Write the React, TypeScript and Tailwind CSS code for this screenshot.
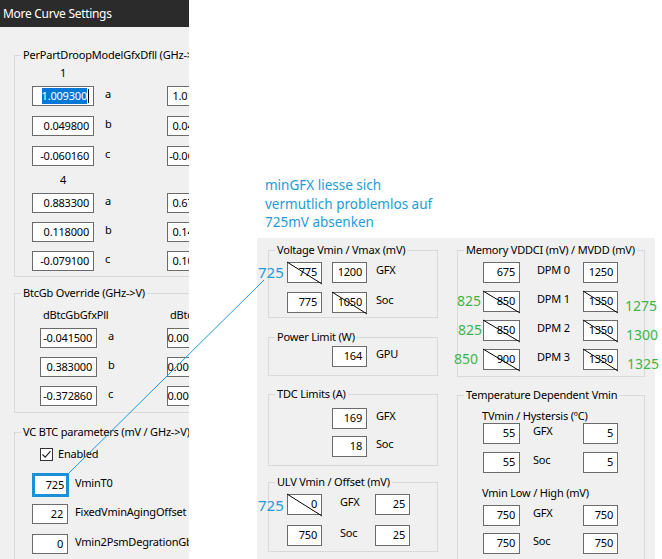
import React from "react"

type BoxProps = {
  v: React.ReactNode
  w: string
  h?: string
  struck?: boolean
}

// white windows style text box, value right aligned
const Box = ({ v, w, h = "h-[21px]", struck }: BoxProps) => (
  <div
    className={`relative flex shrink-0 items-center justify-end border border-[#6b6b6b] bg-white pr-[4px] text-black ${w} ${h}`}
  >
    {v}
    {struck && (
      <svg className="absolute -left-px -top-px h-[calc(100%+3px)] w-[calc(100%+2px)] overflow-visible">
        <line x1="0" y1="0" x2="100%" y2="100%" stroke="#000" strokeWidth="1" />
      </svg>
    )}
  </div>
)

const Group = ({
  title,
  className,
  inner,
  children,
}: {
  title: string
  className: string
  inner: string
  children: React.ReactNode
}) => (
  <fieldset className={`shrink-0 border border-[#d9d9d9] ${className}`}>
    <legend className="ml-[6px] whitespace-nowrap px-[2px] leading-[16px]">{title}</legend>
    <div className={inner}>{children}</div>
  </fieldset>
)

const Label = ({ children, className = "" }: { children: React.ReactNode; className?: string }) => (
  <span className={`shrink-0 whitespace-nowrap leading-[16px] ${className}`}>{children}</span>
)

const Green = ({ children, className }: { children: React.ReactNode; className: string }) => (
  <span className={`absolute text-[14px] leading-[18px] tracking-normal text-[#3db54a] ${className}`}>{children}</span>
)

const Blue = ({ children, className }: { children: React.ReactNode; className: string }) => (
  <span className={`absolute text-[15px] leading-[18px] tracking-normal text-[#239bd7] ${className}`}>{children}</span>
)

const CoefColumn = ({
  head,
  headPad,
  vals,
  boxW,
  gap,
  colW,
}: {
  head: string
  headPad: string
  vals: React.ReactNode[]
  boxW: string
  gap: string
  colW: string
}) => (
  <div className={`flex shrink-0 flex-col ${colW}`}>
    <Label className={headPad}>{head}</Label>
    <div className={`mt-[5px] flex flex-col ${gap}`}>
      {vals.map((v, i) => (
        <div key={i} className="flex items-center">
          <Box v={v} w={boxW} h="h-[20px]" />
          <Label className="-mt-[4px] ml-[11px]">{["a", "b", "c"][i]}</Label>
        </div>
      ))}
    </div>
  </div>
)

export default function App() {
  return (
    <div className="relative flex h-[559px] w-[662px] overflow-hidden bg-white font-['Noto_Sans',sans-serif] text-[11px] tracking-[-0.2px] text-black">
      {/* dialog, cut off at the right */}
      <div className="h-[559px] w-[189px] shrink-0 overflow-hidden bg-[#f0f0f0]">
        <div className="flex h-[27px] w-[189px] items-center bg-[#2b2b2b] pl-[3px] text-[12px] tracking-[-0.3px] text-white">
          More Curve Settings
        </div>
        <div className="w-[420px] pl-[14px]">
          <Group title="PerPartDroopModelGfxDfll (GHz->V)" className="mt-[20px] w-[380px]" inner="pb-[5px] pl-[17px]">
            <div className="mt-[2px] flex">
              <CoefColumn
                head="1"
                headPad="pl-[28px]"
                colW="w-[135px]"
                boxW="w-[62px]"
                gap="gap-[10px]"
                vals={[
                  <span className="flex items-center">
                    <span className="bg-[#0078d7] text-white">1.009300</span>
                    <span className="ml-px h-[14px] w-px bg-black" />
                  </span>,
                  "0.049800",
                  "-0.060160",
                ]}
              />
              <CoefColumn
                head="2"
                headPad="pl-[28px]"
                colW="w-[135px]"
                boxW="w-[62px]"
                gap="gap-[10px]"
                vals={["1.0112000", "0.0497000", "-0.0602000"]}
              />
            </div>
            <div className="mt-[6px] flex">
              <CoefColumn
                head="4"
                headPad="pl-[28px]"
                colW="w-[135px]"
                boxW="w-[62px]"
                gap="gap-[9px]"
                vals={["0.883300", "0.118000", "-0.079100"]}
              />
              <CoefColumn
                head="5"
                headPad="pl-[28px]"
                colW="w-[135px]"
                boxW="w-[62px]"
                gap="gap-[9px]"
                vals={["0.6750000", "0.1460000", "0.1030000"]}
              />
            </div>
          </Group>

          <Group title="BtcGb Override (GHz->V)" className="mt-[8px] w-[380px]" inner="pb-[6px] pl-[25px]">
            <div className="mt-[6px] flex">
              <CoefColumn
                head="dBtcGbGfxPll"
                headPad="pl-[3px]"
                colW="w-[127px]"
                boxW="w-[57px]"
                gap="gap-[9px]"
                vals={["-0.041500", "0.383000", "-0.372860"]}
              />
              <CoefColumn
                head="dBtcGbGfxAfll"
                headPad="pl-[3px]"
                colW="w-[127px]"
                boxW="w-[57px]"
                gap="gap-[9px]"
                vals={["0.0000000", "0.0000000", "0.0000000"]}
              />
            </div>
          </Group>

          <Group title="VC BTC parameters (mV / GHz->V)" className="mt-[11px] w-[380px]" inner="pb-[10px] pl-[17px]">
            <div className="mt-[6px] flex items-center pl-[8px]">
              <span className="flex h-[13px] w-[13px] items-center justify-center border border-[#333] bg-white">
                <svg width="11" height="11" viewBox="0 0 11 11">
                  <path d="M1.5 5.5 L4.2 8.2 L9.5 2.2" fill="none" stroke="#222" strokeWidth="1.2" />
                </svg>
              </span>
              <Label className="ml-[5px]">Enabled</Label>
            </div>
            <div className="mt-[11px] flex items-center">
              <div className="flex h-[24px] w-[37px] items-center justify-end border-[3px] border-[#1a91d6] bg-white pr-[2px]">
                725
              </div>
              <Label className="-mt-[4px] ml-[6px]">VminT0</Label>
            </div>
            <div className="mt-[7px] flex items-center">
              <Box v="22" w="w-[36px]" h="h-[20px]" />
              <Label className="-mt-[4px] ml-[7px]">FixedVminAgingOffset</Label>
            </div>
            <div className="mt-[10px] flex items-center">
              <Box v="0" w="w-[36px]" h="h-[20px]" />
              <Label className="-mt-[4px] ml-[7px]">Vmin2PsmDegrationGb</Label>
            </div>
          </Group>
        </div>
      </div>

      {/* pasted screenshot with notes */}
      <div className="flex flex-col pl-[68px]">
        <div className="mt-[176px] h-[56px] pl-[8px] text-[13.5px] leading-[18.5px] tracking-normal text-[#239bd7]">
          minGFX liesse sich
          <br />
          vermutlich problemlos auf
          <br />
          725mV absenken
        </div>
        <div className="mt-[6px] flex h-[321px] w-[398px] bg-[#f0f0f0] pl-[11px]">
          <div className="flex w-[170px] shrink-0 flex-col">
            <Group title="Voltage Vmin / Vmax (mV)" className="mt-[4px] w-[170px]" inner="pb-[4px] pl-[18px]">
              <div className="mt-[4px] flex flex-col gap-[9px]">
                <div className="relative flex items-start">
                  <Blue className="-left-[29px] top-[1px]">725</Blue>
                  <Box v="775" w="w-[35px]" struck />
                  <div className="ml-[10px]">
                    <Box v="1200" w="w-[35px]" />
                  </div>
                  <Label className="ml-[9px]">GFX</Label>
                </div>
                <div className="flex items-start">
                  <Box v="775" w="w-[35px]" />
                  <div className="ml-[10px]">
                    <Box v="1050" w="w-[35px]" struck />
                  </div>
                  <Label className="ml-[9px]">Soc</Label>
                </div>
              </div>
            </Group>

            <Group title="Power Limit (W)" className="mt-[11px] w-[170px]" inner="pb-[8px] pl-[63px]">
              <div className="mt-px flex items-start">
                <Box v="164" w="w-[35px]" />
                <Label className="ml-[9px]">GPU</Label>
              </div>
            </Group>

            <Group title="TDC Limits (A)" className="mt-[10px] w-[170px]" inner="pb-[8px] pl-[63px]">
              <div className="mt-[6px] flex flex-col gap-[7px]">
                <div className="flex items-start">
                  <Box v="169" w="w-[35px]" />
                  <Label className="ml-[9px]">GFX</Label>
                </div>
                <div className="flex items-start">
                  <Box v="18" w="w-[35px]" />
                  <Label className="ml-[9px]">Soc</Label>
                </div>
              </div>
            </Group>

            <Group title="ULV Vmin / Offset (mV)" className="mt-[8px] w-[170px]" inner="pb-[5px] pl-[18px]">
              <div className="mt-[4px] flex flex-col gap-[10px]">
                <div className="relative flex items-start">
                  <Blue className="-left-[29px] top-[2px]">725</Blue>
                  <Box v="0" w="w-[35px]" struck />
                  <Label className="w-[53px] pl-[18px]">GFX</Label>
                  <Box v="25" w="w-[35px]" />
                </div>
                <div className="flex items-start">
                  <Box v="750" w="w-[35px]" />
                  <Label className="w-[53px] pl-[18px]">Soc</Label>
                  <Box v="25" w="w-[35px]" />
                </div>
              </div>
            </Group>
          </div>

          <div className="ml-[19px] flex w-[188px] shrink-0 flex-col">
            <Group title="Memory VDDCI (mV) / MVDD (mV)" className="mt-[4px] w-[188px]" inner="pb-[6px] pl-[25px]">
              <div className="mt-[4px] flex flex-col gap-[8px]">
                {[
                  { l: "675", r: "1250", s: false },
                  { l: "850", r: "1350", s: true, gl: "825", gr: "1275", glp: "-left-[26px]", grp: "left-[142px]" },
                  { l: "850", r: "1350", s: true, gl: "825", gr: "1300", glp: "-left-[25px]", grp: "left-[143px]" },
                  { l: "900", r: "1350", s: true, gl: "850", gr: "1325", glp: "-left-[29px]", grp: "left-[144px]" },
                ].map((row, i) => (
                  <div key={i} className="relative flex items-start">
                    {row.gl && <Green className={`top-[1px] ${row.glp}`}>{row.gl}</Green>}
                    {row.gr && <Green className={`top-[6px] ${row.grp}`}>{row.gr}</Green>}
                    <Box v={row.l} w="w-[37px]" struck={row.s} />
                    <Label className="w-[63px] pl-[17px]">DPM {i}</Label>
                    <Box v={row.r} w="w-[35px]" struck={row.s} />
                  </div>
                ))}
              </div>
            </Group>

            <Group title="Temperature Dependent Vmin" className="mt-[10px] h-[200px] w-[188px]" inner="pl-[25px]">
              <div className="mt-[6px] -ml-px whitespace-nowrap leading-[14px]">TVmin / Hystersis (ºC)</div>
              <div className="flex flex-col gap-[8px]">
                <div className="flex items-start">
                  <Box v="55" w="w-[37px]" />
                  <Label className="w-[63px] pl-[13px]">GFX</Label>
                  <Box v="5" w="w-[35px]" />
                </div>
                <div className="flex items-start">
                  <Box v="55" w="w-[37px]" />
                  <Label className="w-[63px] pl-[13px]">Soc</Label>
                  <Box v="5" w="w-[35px]" />
                </div>
              </div>
              <div className="mt-[13px] -ml-px whitespace-nowrap leading-[14px]">Vmin Low / High (mV)</div>
              <div className="mt-[5px] flex flex-col gap-[7px]">
                <div className="flex items-start">
                  <Box v="750" w="w-[37px]" />
                  <Label className="w-[63px] pl-[13px]">GFX</Label>
                  <Box v="750" w="w-[35px]" />
                </div>
                <div className="flex items-start">
                  <Box v="750" w="w-[37px]" />
                  <Label className="w-[63px] pl-[13px]">Soc</Label>
                  <Box v="750" w="w-[35px]" />
                </div>
              </div>
            </Group>
          </div>
        </div>
      </div>

      {/* annotation line from the note to the VminT0 box */}
      <svg className="pointer-events-none absolute left-0 top-0" width="662" height="559">
        <line x1="264" y1="280" x2="68" y2="474" stroke="#1e9ad6" strokeWidth="1" />
      </svg>
    </div>
  )
}
